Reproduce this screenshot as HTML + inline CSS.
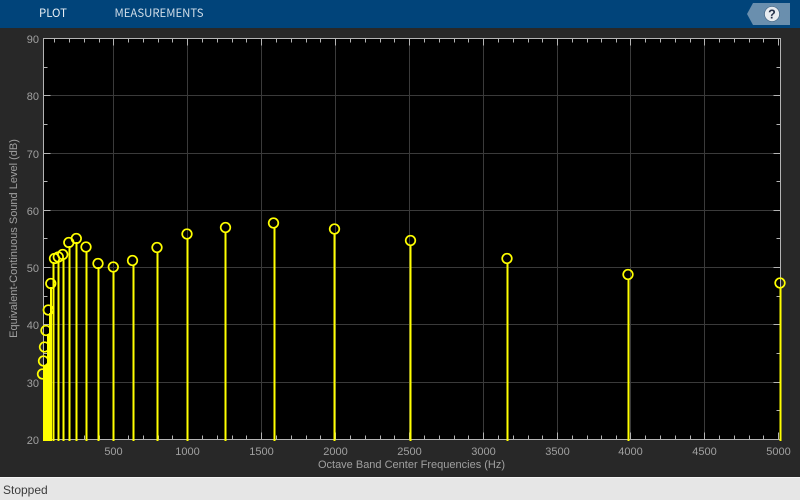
<!DOCTYPE html>
<html>
<head>
<meta charset="utf-8">
<style>
html,body{margin:0;padding:0;width:800px;height:500px;overflow:hidden;background:#282828}
svg{display:block;position:absolute;left:0;top:0}
</style>
</head>
<body>
<svg width="800" height="500" viewBox="0 0 800 500" xmlns="http://www.w3.org/2000/svg">
<rect width="800" height="500" fill="#282828"/>
<rect width="800" height="28" fill="#01447a"/>
<text x="39" y="17" font-family="'Noto Sans CJK JP','DejaVu Sans',sans-serif" font-size="11.500" fill="#e6edf3" textLength="28" lengthAdjust="spacingAndGlyphs">PLOT</text>
<text x="114.500" y="17" font-family="'Noto Sans CJK JP','DejaVu Sans',sans-serif" font-size="11.500" fill="#d0dde8" textLength="89" lengthAdjust="spacingAndGlyphs">MEASUREMENTS</text>
<path d="M753 3H790V25H753L747 14Z" fill="#6a8fae"/>
<circle cx="772" cy="14" r="7.500" fill="#e8ecf0" stroke="#3f5f7c" stroke-width="0.600"/>
<text x="772" y="18.500" text-anchor="middle" font-family="'Liberation Sans',sans-serif" font-weight="bold" font-size="12.500" fill="#26324a">?</text>

<rect x="43.500" y="38.500" width="737" height="401" fill="#000"/>
<g stroke="#3a3a3a" stroke-width="1" fill="none">
<path d="M113.500 38.500V439.500M187.500 38.500V439.500M261.500 38.500V439.500M335.500 38.500V439.500M409.500 38.500V439.500M483.500 38.500V439.500M557.500 38.500V439.500M630.500 38.500V439.500M704.500 38.500V439.500"/>
<path d="M43.500 95.500H780M43.500 153.500H780M43.500 210.500H780M43.500 267.500H780M43.500 324.500H780M43.500 382.500H780"/>
</g>
<g stroke="#b4b4b4" stroke-width="1" fill="none">
<path d="M43.500 439.500V38.500H780.500V439.500H43.500"/>
<path d="M113.500 439.500v-7M187.500 439.500v-7M261.500 439.500v-7M335.500 439.500v-7M409.500 439.500v-7M483.500 439.500v-7M557.500 439.500v-7M630.500 439.500v-7M704.500 439.500v-7M778.500 439.500v-7"/>
<path d="M113.500 38.500v7M187.500 38.500v7M261.500 38.500v7M335.500 38.500v7M409.500 38.500v7M483.500 38.500v7M557.500 38.500v7M630.500 38.500v7M704.500 38.500v7M778.500 38.500v7"/>
<path d="M43.500 95.500h7M43.500 153.500h7M43.500 210.500h7M43.500 267.500h7M43.500 324.500h7M43.500 382.500h7M780.500 95.500h-7M780.500 153.500h-7M780.500 210.500h-7M780.500 267.500h-7M780.500 324.500h-7M780.500 382.500h-7"/>
<path d="M43.500 67.500h4M43.500 124.500h4M43.500 181.500h4M43.500 238.500h4M43.500 296.500h4M43.500 353.500h4M43.500 410.500h4M780.500 67.500h-4M780.500 124.500h-4M780.500 181.500h-4M780.500 238.500h-4M780.500 296.500h-4M780.500 353.500h-4M780.500 410.500h-4"/>
<path d="M69.500 439.500v-4M84.500 439.500v-4M99.500 439.500v-4M128.500 439.500v-4M143.500 439.500v-4M158.500 439.500v-4M172.500 439.500v-4M202.500 439.500v-4M217.500 439.500v-4M232.500 439.500v-4M246.500 439.500v-4M276.500 439.500v-4M291.500 439.500v-4M306.500 439.500v-4M320.500 439.500v-4M350.500 439.500v-4M365.500 439.500v-4M380.500 439.500v-4M394.500 439.500v-4M424.500 439.500v-4M439.500 439.500v-4M454.500 439.500v-4M468.500 439.500v-4M498.500 439.500v-4M513.500 439.500v-4M528.500 439.500v-4M542.500 439.500v-4M572.500 439.500v-4M587.500 439.500v-4M601.500 439.500v-4M616.500 439.500v-4M645.500 439.500v-4M660.500 439.500v-4M675.500 439.500v-4M690.500 439.500v-4M719.500 439.500v-4M734.500 439.500v-4M749.500 439.500v-4M763.500 439.500v-4"/>
<path d="M54.500 38.500v4M69.500 38.500v4M84.500 38.500v4M99.500 38.500v4M128.500 38.500v4M143.500 38.500v4M158.500 38.500v4M172.500 38.500v4M202.500 38.500v4M217.500 38.500v4M232.500 38.500v4M246.500 38.500v4M276.500 38.500v4M291.500 38.500v4M306.500 38.500v4M320.500 38.500v4M350.500 38.500v4M365.500 38.500v4M380.500 38.500v4M394.500 38.500v4M424.500 38.500v4M439.500 38.500v4M454.500 38.500v4M468.500 38.500v4M498.500 38.500v4M513.500 38.500v4M528.500 38.500v4M542.500 38.500v4M572.500 38.500v4M587.500 38.500v4M601.500 38.500v4M616.500 38.500v4M645.500 38.500v4M660.500 38.500v4M675.500 38.500v4M690.500 38.500v4M719.500 38.500v4M734.500 38.500v4M749.500 38.500v4M763.500 38.500v4"/>
</g>

<g fill="#ffff00">
<rect x="43" y="376" width="2" height="65"/>
<rect x="43" y="365" width="4" height="76"/>
<rect x="43" y="378" width="9" height="63"/>
<rect x="47" y="334" width="2" height="107"/>
<rect x="49" y="313" width="2" height="128"/>
<rect x="50" y="287" width="2" height="154"/>
</g>
<g stroke="#ffff00" stroke-width="2" fill="none">
<path d="M53.500 262V441M58.500 261V441M63.500 258V441M69.500 246V441M76.500 242V441M86.500 251V441M98.500 267V441M113.500 271V441M133.500 265V441M157.500 252V441M187.500 238V441M225.500 232V441M274.500 227V441M334.500 233V441M410.500 245V441M507.500 263V441M628.500 279V441M780.500 287V441"/>
</g>
<g stroke="#ffff00" stroke-width="1.700" fill="none">
<circle cx="42.500" cy="374" r="4.800"/>
<circle cx="43.500" cy="361" r="4.800"/>
<circle cx="44.500" cy="347" r="4.800"/>
<circle cx="46" cy="330.500" r="4.800"/>
<circle cx="48.300" cy="310" r="4.800"/>
<circle cx="50.800" cy="283.500" r="4.800"/>
<circle cx="54.500" cy="258.500" r="4.800"/>
<circle cx="58.300" cy="257" r="4.800"/>
<circle cx="62.700" cy="254.500" r="4.800"/>
<circle cx="68.800" cy="242.500" r="4.800"/>
<circle cx="76.300" cy="238.500" r="4.800"/>
<circle cx="86" cy="247" r="4.800"/>
<circle cx="98" cy="263.500" r="4.800"/>
<circle cx="113.300" cy="267" r="4.800"/>
<circle cx="132.500" cy="260.500" r="4.800"/>
<circle cx="157" cy="247.500" r="4.800"/>
<circle cx="187" cy="234" r="4.800"/>
<circle cx="225.500" cy="227.500" r="4.800"/>
<circle cx="273.500" cy="223" r="4.800"/>
<circle cx="334.500" cy="229" r="4.800"/>
<circle cx="410.500" cy="240.500" r="4.800"/>
<circle cx="507" cy="258.500" r="4.800"/>
<circle cx="628" cy="274.500" r="4.800"/>
<circle cx="780" cy="283" r="4.800"/>
</g>

<g font-family="'Liberation Sans',sans-serif" font-size="11" fill="#a0a0a0">
<g text-anchor="end">
<text x="39" y="43">90</text>
<text x="39" y="100">80</text>
<text x="39" y="158">70</text>
<text x="39" y="215">60</text>
<text x="39" y="272">50</text>
<text x="39" y="329">40</text>
<text x="39" y="387">30</text>
<text x="39" y="444">20</text>
</g>
<g text-anchor="middle">
<text x="113.500" y="455">500</text>
<text x="187.500" y="455">1000</text>
<text x="261.500" y="455">1500</text>
<text x="335.500" y="455">2000</text>
<text x="409.500" y="455">2500</text>
<text x="483.500" y="455">3000</text>
<text x="557.500" y="455">3500</text>
<text x="630.500" y="455">4000</text>
<text x="704.500" y="455">4500</text>
<text x="778.500" y="455">5000</text>
<text x="411.500" y="468">Octave Band Center Frequencies (Hz)</text>
<text transform="translate(17 238.500) rotate(-90)">Equivalent-Continuous Sound Level (dB)</text>
</g>
</g>

<rect x="0" y="477" width="800" height="23" fill="#e6e6e6"/>
<rect x="0" y="477" width="800" height="1" fill="#f4f4f4"/>
<text x="3" y="494" font-family="'Liberation Sans',sans-serif" font-size="12" fill="#3c3c3c">Stopped</text>
</svg>
</body>
</html>
